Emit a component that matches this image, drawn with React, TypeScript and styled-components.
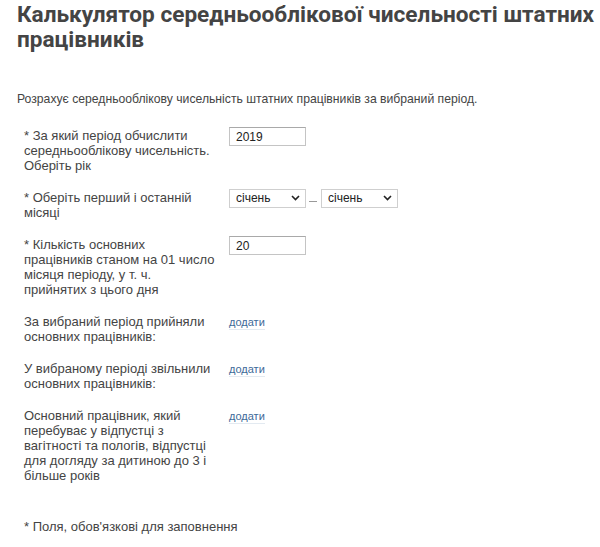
import React from "react";
import styled, { createGlobalStyle } from "styled-components";

const Global = createGlobalStyle`
  html, body { margin: 0; padding: 0; background: #fff; }
  body { font-family: "Liberation Sans", Arial, sans-serif; color: #444; }
`;

const Page = styled.div`
  padding: 2px 0 0 17px;
  box-sizing: border-box;
`;

const Title = styled.h1`
  margin: 0;
  font-family: Roboto, "Liberation Sans", Arial, sans-serif;
  font-size: 22.6px;
  line-height: 25px;
  font-weight: bold;
  color: #444;
`;

const Intro = styled.p`
  margin: 40px 0 0 0;
  font-size: 12.2px;
  line-height: 15px;
  color: #444;
`;

const Form = styled.div`
  margin: 21px 0 0 7px;
  display: flex;
  flex-direction: column;
  gap: 17px;
`;

const Row = styled.div<{ $link?: boolean }>`
  display: grid;
  grid-template-columns: 205px auto;
  align-items: ${(p) => (p.$link ? "baseline" : "start")};
`;

const Label = styled.div`
  font-size: 13px;
  line-height: 15px;
  color: #444;
  padding-right: 14px;
`;

const Controls = styled.div<{ $shift?: number }>`
  display: flex;
  align-items: center;
  margin-top: ${(p) => p.$shift ?? -1}px;
`;

const TextInput = styled.input`
  box-sizing: border-box;
  width: 77px;
  height: 19px;
  margin: 0;
  padding: 0 6px;
  border: 1px solid #c4c4c4;
  border-top-color: #a9a9a9;
  font-family: "Liberation Sans", Arial, sans-serif;
  font-size: 12px;
  color: #222;
  outline: none;
`;

const SelectWrap = styled.div`
  position: relative;
  width: 77px;
  height: 19px;
`;

const Select = styled.select`
  appearance: none;
  -webkit-appearance: none;
  box-sizing: border-box;
  width: 100%;
  height: 100%;
  margin: 0;
  padding: 0 0 0 6px;
  border: 1px solid #cfcfcf;
  background: #fff;
  font-family: "Liberation Sans", Arial, sans-serif;
  font-size: 12px;
  color: #222;
  outline: none;
`;

const Chevron = styled.svg`
  position: absolute;
  right: 6px;
  top: 7px;
  width: 9px;
  height: 6px;
  pointer-events: none;
`;

const Dash = styled.span`
  display: inline-block;
  width: 8px;
  height: 1px;
  background: #999;
  margin: 13px 4px 0 3px;
  align-self: flex-start;
`;

const AddLink = styled.a`
  font-size: 11px;
  line-height: 13px;
  color: #3d6a99;
  text-decoration: none;
  border-bottom: 1px solid #e3eaf1;
  justify-self: start;
  cursor: pointer;
`;

const Footnote = styled.p`
  margin: 36px 0 0 7px;
  font-size: 13px;
  line-height: 15px;
  color: #444;
`;

const MonthSelect: React.FC = () => (
  <SelectWrap>
    <Select defaultValue="1">
      <option value="1">січень</option>
      <option value="2">лютий</option>
      <option value="3">березень</option>
    </Select>
    <Chevron viewBox="0 0 9 6">
      <path d="M1 1 L4.5 4.5 L8 1" fill="none" stroke="#222" strokeWidth="1.6" />
    </Chevron>
  </SelectWrap>
);

export default function App() {
  return (
    <Page>
      <Global />
      <Title>Калькулятор середньооблікової чисельності штатних працівників</Title>
      <Intro>
        Розрахує середньооблікову чисельність штатних працівників за вибраний період.
      </Intro>
      <Form>
        <Row>
          <Label>* За який період обчислити середньооблікову чисельність. Оберіть рік</Label>
          <Controls>
            <TextInput defaultValue="2019" />
          </Controls>
        </Row>
        <Row>
          <Label>* Оберіть перший і останній місяці</Label>
          <Controls $shift={-2}>
            <MonthSelect />
            <Dash />
            <MonthSelect />
          </Controls>
        </Row>
        <Row>
          <Label>* Кількість основних працівників станом на 01 число місяця періоду, у т. ч. прийнятих з цього дня</Label>
          <Controls>
            <TextInput defaultValue="20" />
          </Controls>
        </Row>
        <Row $link>
          <Label>За вибраний період прийняли основних працівників:</Label>
          <AddLink>додати</AddLink>
        </Row>
        <Row $link>
          <Label>У вибраному періоді звільнили основних працівників:</Label>
          <AddLink>додати</AddLink>
        </Row>
        <Row $link>
          <Label>Основний працівник, який перебуває у відпустці з вагітності та пологів, відпустці для догляду за дитиною до 3 і більше років</Label>
          <AddLink>додати</AddLink>
        </Row>
      </Form>
      <Footnote>* Поля, обов'язкові для заповнення</Footnote>
    </Page>
  );
}
